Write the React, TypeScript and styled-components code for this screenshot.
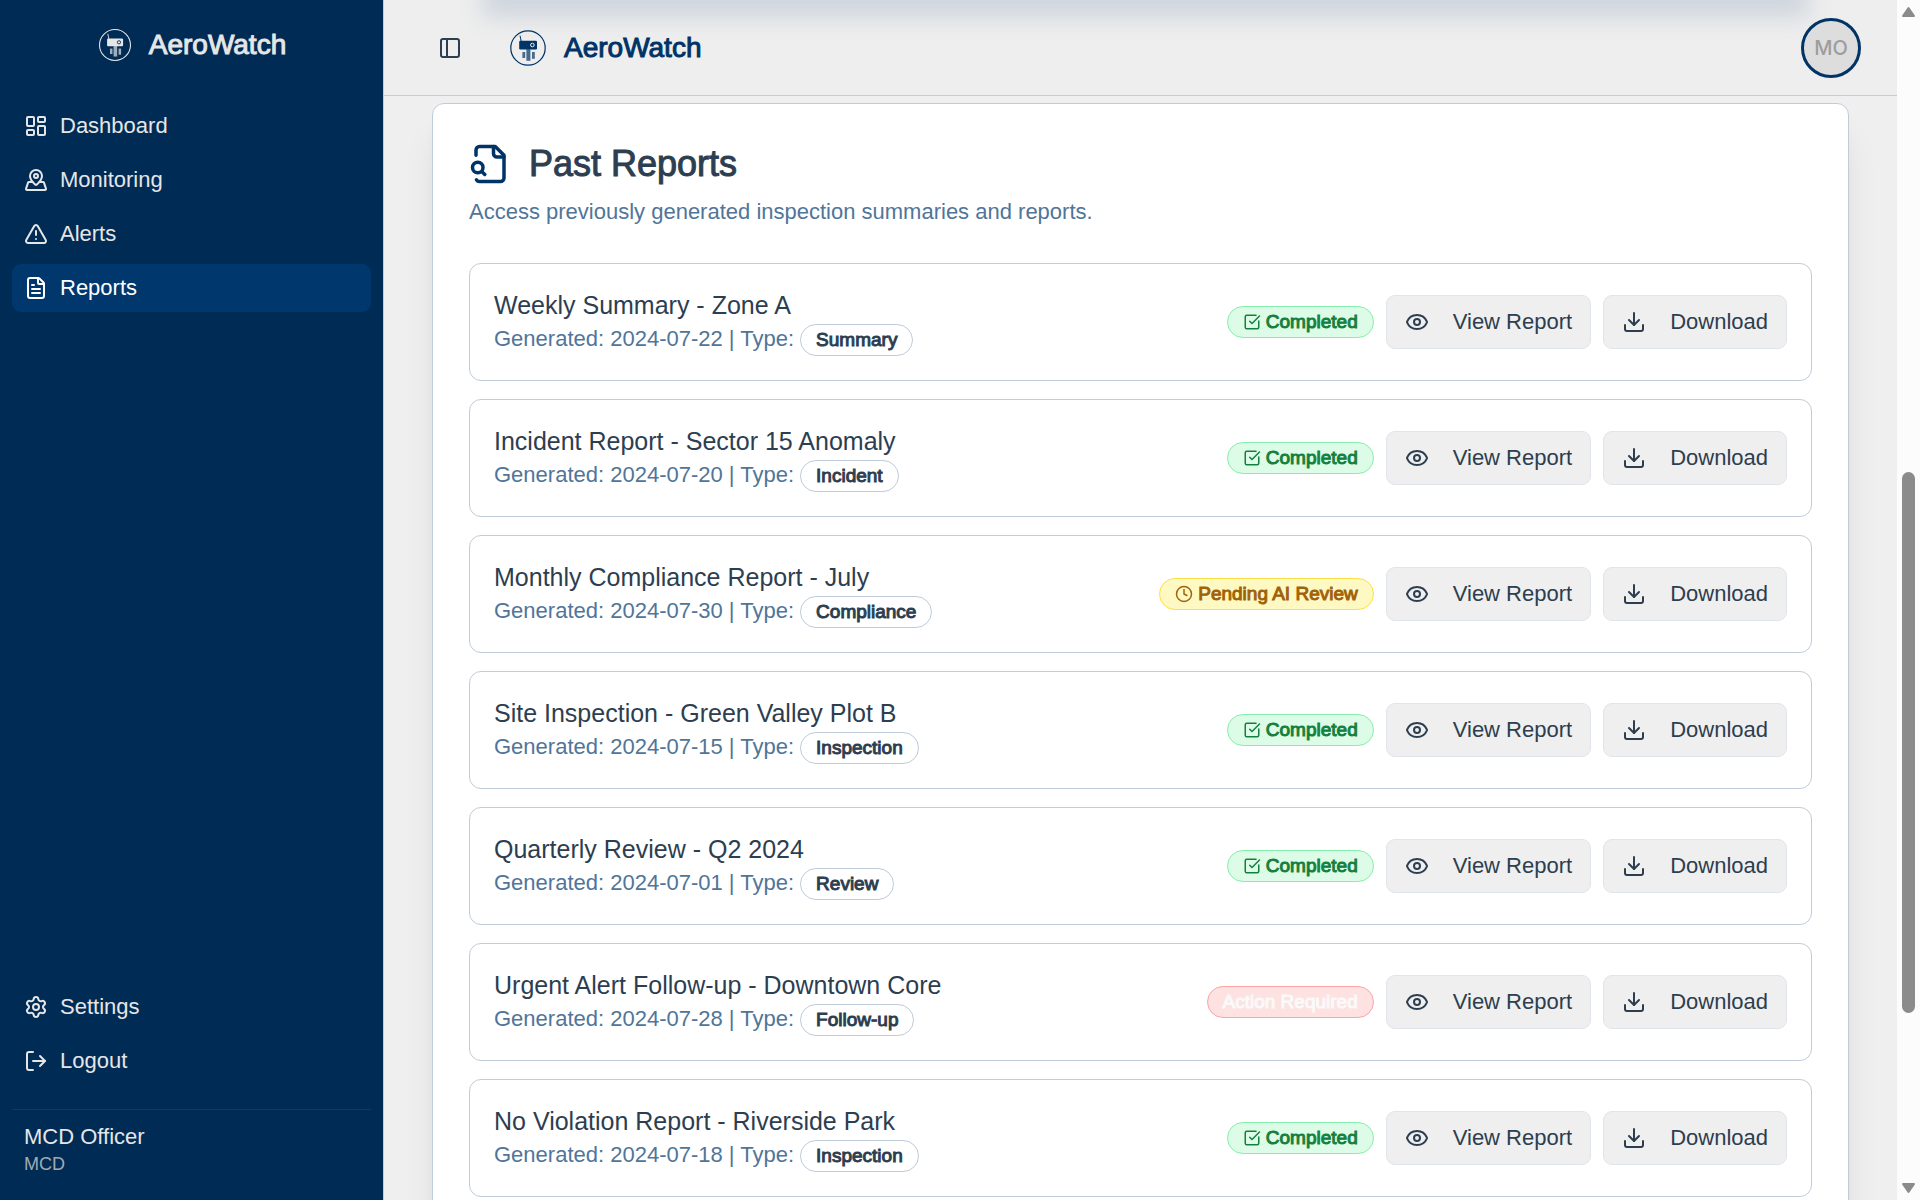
import React from "react";
import styled, { createGlobalStyle, css } from "styled-components";
import {
  Clock,
  Download,
  Eye,
  FileText,
  LayoutDashboard,
  LogOut,
  MapPinned,
  PanelLeft,
  Settings,
  SquareCheckBig,
  TriangleAlert,
} from "lucide-react";

const color = {
  navy: "#003366",
  sidebar: "#002b55",
  sidebarActive: "#00386e",
  sidebarText: "#e6e6e6",
  page: "#efefef",
  border: "#bfccd9",
  text: "#2c3e50",
  muted: "#507599",
};

const GlobalStyle = createGlobalStyle`
  *, *::before, *::after { box-sizing: border-box; }
  body {
    margin: 0;
    background: ${color.page};
    color: ${color.text};
    font-family: "Liberation Sans", Arial, Helvetica, sans-serif;
    font-size: 22px;
    line-height: 30px;
  }
  h1, h2, h3, p, ul { margin: 0; padding: 0; font: inherit; }
  ul { list-style: none; }
  button { font: inherit; color: inherit; margin: 0; cursor: pointer; }
  a { color: inherit; text-decoration: none; }
  svg { flex: none; display: block; }
`;

const Shell = styled.div`
  display: flex;
  height: 100vh;
  overflow: hidden;
`;

const Sidebar = styled.aside`
  flex: none;
  width: 384px;
  display: flex;
  flex-direction: column;
  background: ${color.sidebar};
  color: ${color.sidebarText};
  border-right: 1px solid ${color.border};
`;

const Brand = styled.div<{ $tone: string }>`
  display: flex;
  align-items: center;
  gap: 16px;
  color: ${(p) => p.$tone};
  font-size: 28px;
  line-height: 42px;
  -webkit-text-stroke: 1px currentColor;
`;

const SidebarTop = styled.div`
  display: flex;
  justify-content: center;
  padding: 24px 12px;
`;

const NavList = styled.ul`
  display: flex;
  flex-direction: column;
  gap: 6px;
  padding: 12px;
`;

const SidebarNav = styled.nav`
  flex: 1;
`;

const navItem = css`
  display: flex;
  align-items: center;
  gap: 12px;
  width: 100%;
  height: 48px;
  padding: 0 12px;
  border: 0;
  border-radius: 9px;
  text-align: left;
`;

const NavLink = styled.a<{ $active?: boolean }>`
  ${navItem}
  background: ${(p) => (p.$active ? color.sidebarActive : "transparent")};
  color: ${(p) => (p.$active ? "#ffffff" : color.sidebarText)};
`;

const NavButton = styled.button`
  ${navItem}
  background: transparent;
`;

const SidebarFooter = styled.div`
  display: flex;
  flex-direction: column;
  gap: 12px;
  padding-bottom: 12px;
`;

const Account = styled.div`
  margin: 0 12px;
  padding: 12px;
  border-top: 1px solid #003d7a;
`;

const AccountRole = styled.p`
  font-size: 18px;
  line-height: 24px;
  color: #a0aab4;
`;

const Main = styled.div`
  flex: 1;
  min-width: 0;
  display: flex;
  flex-direction: column;
`;

const Header = styled.header`
  position: relative;
  z-index: 1;
  flex: none;
  height: 96px;
  overflow: hidden;
  display: flex;
  align-items: center;
  gap: 28px;
  padding: 0 36px;
  background: #eeeeee;
  border-bottom: 1px solid ${color.border};

  &::before {
    content: "";
    position: absolute;
    top: -40px;
    left: 98px;
    right: 88px;
    height: 58px;
    background: #d0d6de;
    filter: blur(11px);
  }

  > * { position: relative; }
`;

const IconButton = styled.button`
  display: flex;
  align-items: center;
  justify-content: center;
  width: 60px;
  height: 42px;
  padding: 0;
  border: 0;
  border-radius: 9px;
  background: transparent;
`;

const Avatar = styled.button`
  margin-left: auto;
  width: 60px;
  height: 60px;
  padding: 0;
  border: 3px solid ${color.navy};
  border-radius: 50%;
  background: #dddddd;
  color: #9d9d9d;
  font-family: Inter, sans-serif;
  font-size: 20px;
  font-weight: 500;
`;

const Content = styled.main`
  flex: 1;
  min-height: 0;
  overflow: hidden;
  padding: 7px 48px 48px;
`;

const Card = styled.section`
  padding: 36px;
  background: #ffffff;
  border: 1px solid ${color.border};
  border-radius: 12px;
  box-shadow: 0 30px 38px -8px rgba(0, 0, 0, 0.1), 0 12px 15px -9px rgba(0, 0, 0, 0.1);
`;

const CardHeader = styled.div`
  display: flex;
  flex-direction: column;
  gap: 9px;
  margin-bottom: 36px;
`;

const CardTitle = styled.h2`
  display: flex;
  align-items: center;
  gap: 18px;
  font-size: 36px;
  line-height: 48px;

  span { -webkit-text-stroke: 1px currentColor; }
  svg { color: ${color.navy}; }
`;

const Muted = styled.p`
  color: ${color.muted};
`;

const ReportList = styled.ul`
  display: flex;
  flex-direction: column;
  gap: 18px;
`;

const ReportRow = styled.li`
  display: flex;
  align-items: center;
  justify-content: space-between;
  gap: 24px;
  padding: 24px;
  border: 1px solid ${color.border};
  border-radius: 12px;
`;

const ReportInfo = styled.div`
  display: flex;
  flex-direction: column;
  gap: 2px;
`;

const ReportTitle = styled.h3`
  font-size: 25px;
  line-height: 34px;
`;

const ReportMeta = styled.div`
  display: flex;
  gap: 6px;
  color: ${color.muted};
`;

type Tone = "outline" | "green" | "yellow" | "red";

const tones: Record<Tone, [string, string, string]> = {
  outline: ["transparent", color.border, color.text],
  green: ["#dcfce7", "#86efac", "#15803d"],
  yellow: ["#fef9c3", "#fde047", "#a16207"],
  red: ["#fee2e2", "#fca5a5", "#fafafa"],
};

const Badge = styled.span<{ $tone: Tone }>`
  display: inline-flex;
  align-items: center;
  gap: 5px;
  height: 32px;
  padding: 0 15px;
  border: 1px solid ${(p) => tones[p.$tone][1]};
  border-radius: 16px;
  background: ${(p) => tones[p.$tone][0]};
  color: ${(p) => tones[p.$tone][2]};
  font-size: 19px;
  line-height: 24px;
  white-space: nowrap;

  span { -webkit-text-stroke: 1px currentColor; }
`;

const Actions = styled.div`
  display: flex;
  align-items: center;
  gap: 12px;
`;

const ActionButton = styled.button`
  display: flex;
  align-items: center;
  gap: 24px;
  height: 54px;
  padding: 0 18px;
  border: 1px solid #e0e5eb;
  border-radius: 9px;
  background: #efefef;
  white-space: nowrap;
`;

const ScrollRail = styled.div`
  flex: none;
  width: 23px;
  display: flex;
  flex-direction: column;
  align-items: center;
  padding: 6px 0;
  background: #fcfcfc;
`;

const ScrollTrack = styled.div`
  flex: 1;
  width: 13px;
  display: flex;
  flex-direction: column;
`;

const ScrollSpace = styled.div<{ $grow: number }>`
  flex: ${(p) => p.$grow} 0 0;
`;

const ScrollThumb = styled(ScrollSpace)`
  border-radius: 7px;
  background: #8b8b8b;
`;

function Logo({ size, lens }: { size: number; lens: string }) {
  return (
    <svg width={size} height={size} viewBox="0 0 100 100" fill="none" aria-hidden="true">
      <circle cx="50" cy="50" r="43" stroke="currentColor" strokeWidth="3" />
      <path d="M30 19l3 14" stroke="currentColor" strokeWidth="2.5" />
      <rect x="28" y="32" width="44.5" height="21.5" rx="3" fill="currentColor" />
      <circle cx="61" cy="42.5" r="4.5" stroke={lens} strokeWidth="2.5" />
      <g fill="currentColor">
        <rect x="36" y="60" width="7" height="15" opacity="0.7" />
        <rect x="46" y="53" width="10" height="29" opacity="0.7" />
        <rect x="60" y="60" width="7" height="17" opacity="0.7" />
      </g>
    </svg>
  );
}

function FileSearchIcon() {
  return (
    <svg
      width="42"
      height="42"
      viewBox="0 0 24 24"
      fill="none"
      stroke="currentColor"
      strokeWidth="2"
      strokeLinecap="round"
      strokeLinejoin="round"
      aria-hidden="true"
    >
      <path d="M14 2v4a2 2 0 0 0 2 2h4" />
      <path d="M4.268 21a2 2 0 0 0 1.727 1H18a2 2 0 0 0 2-2V7l-5-5H6a2 2 0 0 0-2 2v3" />
      <path d="m9 18-1.5-1.5" />
      <circle cx="5" cy="14" r="3" />
    </svg>
  );
}

function ScrollArrow({ down }: { down?: boolean }) {
  return (
    <svg width="15" height="12" viewBox="0 0 15 12" aria-hidden="true">
      <path
        d={down ? "M2 2h11L7.5 10z" : "M2 10h11L7.5 2z"}
        fill="#8b8b8b"
        stroke="#8b8b8b"
        strokeWidth="2"
        strokeLinejoin="round"
      />
    </svg>
  );
}

const navigation = [
  { label: "Dashboard", Icon: LayoutDashboard },
  { label: "Monitoring", Icon: MapPinned },
  { label: "Alerts", Icon: TriangleAlert },
  { label: "Reports", Icon: FileText },
];

type Status = "Completed" | "Pending AI Review" | "Action Required";

const reports: { title: string; date: string; type: string; status: Status }[] = [
  { title: "Weekly Summary - Zone A", date: "2024-07-22", type: "Summary", status: "Completed" },
  { title: "Incident Report - Sector 15 Anomaly", date: "2024-07-20", type: "Incident", status: "Completed" },
  { title: "Monthly Compliance Report - July", date: "2024-07-30", type: "Compliance", status: "Pending AI Review" },
  { title: "Site Inspection - Green Valley Plot B", date: "2024-07-15", type: "Inspection", status: "Completed" },
  { title: "Quarterly Review - Q2 2024", date: "2024-07-01", type: "Review", status: "Completed" },
  { title: "Urgent Alert Follow-up - Downtown Core", date: "2024-07-28", type: "Follow-up", status: "Action Required" },
  { title: "No Violation Report - Riverside Park", date: "2024-07-18", type: "Inspection", status: "Completed" },
];

const statusStyle: Record<Status, { tone: Tone; Icon?: typeof Clock }> = {
  Completed: { tone: "green", Icon: SquareCheckBig },
  "Pending AI Review": { tone: "yellow", Icon: Clock },
  "Action Required": { tone: "red" },
};

function StatusBadge({ status }: { status: Status }) {
  const { tone, Icon } = statusStyle[status];
  return (
    <Badge $tone={tone}>
      {Icon && <Icon size={18} />}
      <span>{status}</span>
    </Badge>
  );
}

export default function App() {
  return (
    <>
      <GlobalStyle />
      <Shell>
        <Sidebar>
          <SidebarTop>
            <Brand $tone={color.sidebarText}>
              <Logo size={36} lens={color.sidebar} />
              <span>AeroWatch</span>
            </Brand>
          </SidebarTop>
          <SidebarNav aria-label="Main">
            <NavList>
              {navigation.map(({ label, Icon }) => (
                <li key={label}>
                  <NavLink
                    href={`#${label.toLowerCase()}`}
                    $active={label === "Reports"}
                    aria-current={label === "Reports" ? "page" : undefined}
                  >
                    <Icon size={24} />
                    {label}
                  </NavLink>
                </li>
              ))}
            </NavList>
          </SidebarNav>
          <SidebarFooter>
            <NavList>
              <li>
                <NavLink href="#settings">
                  <Settings size={24} />
                  Settings
                </NavLink>
              </li>
              <li>
                <NavButton type="button">
                  <LogOut size={24} />
                  Logout
                </NavButton>
              </li>
            </NavList>
            <Account>
              <p>MCD Officer</p>
              <AccountRole>MCD</AccountRole>
            </Account>
          </SidebarFooter>
        </Sidebar>

        <Main>
          <Header>
            <IconButton type="button" aria-label="Toggle sidebar">
              <PanelLeft size={24} />
            </IconButton>
            <Brand $tone={color.navy}>
              <Logo size={40} lens="#eeeeee" />
              <h1>AeroWatch</h1>
            </Brand>
            <Avatar type="button" aria-label="Account menu">
              MO
            </Avatar>
          </Header>
          <Content>
            <Card>
              <CardHeader>
                <CardTitle>
                  <FileSearchIcon />
                  <span>Past Reports</span>
                </CardTitle>
                <Muted>Access previously generated inspection summaries and reports.</Muted>
              </CardHeader>
              <ReportList>
                {reports.map((report) => (
                  <ReportRow key={report.title}>
                    <ReportInfo>
                      <ReportTitle>{report.title}</ReportTitle>
                      <ReportMeta>
                        <p>
                          Generated: {report.date} | Type:
                        </p>
                        <Badge $tone="outline">
                          <span>{report.type}</span>
                        </Badge>
                      </ReportMeta>
                    </ReportInfo>
                    <Actions>
                      <StatusBadge status={report.status} />
                      <ActionButton type="button">
                        <Eye size={24} />
                        View Report
                      </ActionButton>
                      <ActionButton type="button">
                        <Download size={24} />
                        Download
                      </ActionButton>
                    </Actions>
                  </ReportRow>
                ))}
              </ReportList>
            </Card>
          </Content>
        </Main>

        <ScrollRail aria-hidden="true">
          <ScrollArrow />
          <ScrollTrack>
            <ScrollSpace $grow={454} />
            <ScrollThumb $grow={541} />
            <ScrollSpace $grow={169} />
          </ScrollTrack>
          <ScrollArrow down />
        </ScrollRail>
      </Shell>
    </>
  );
}
